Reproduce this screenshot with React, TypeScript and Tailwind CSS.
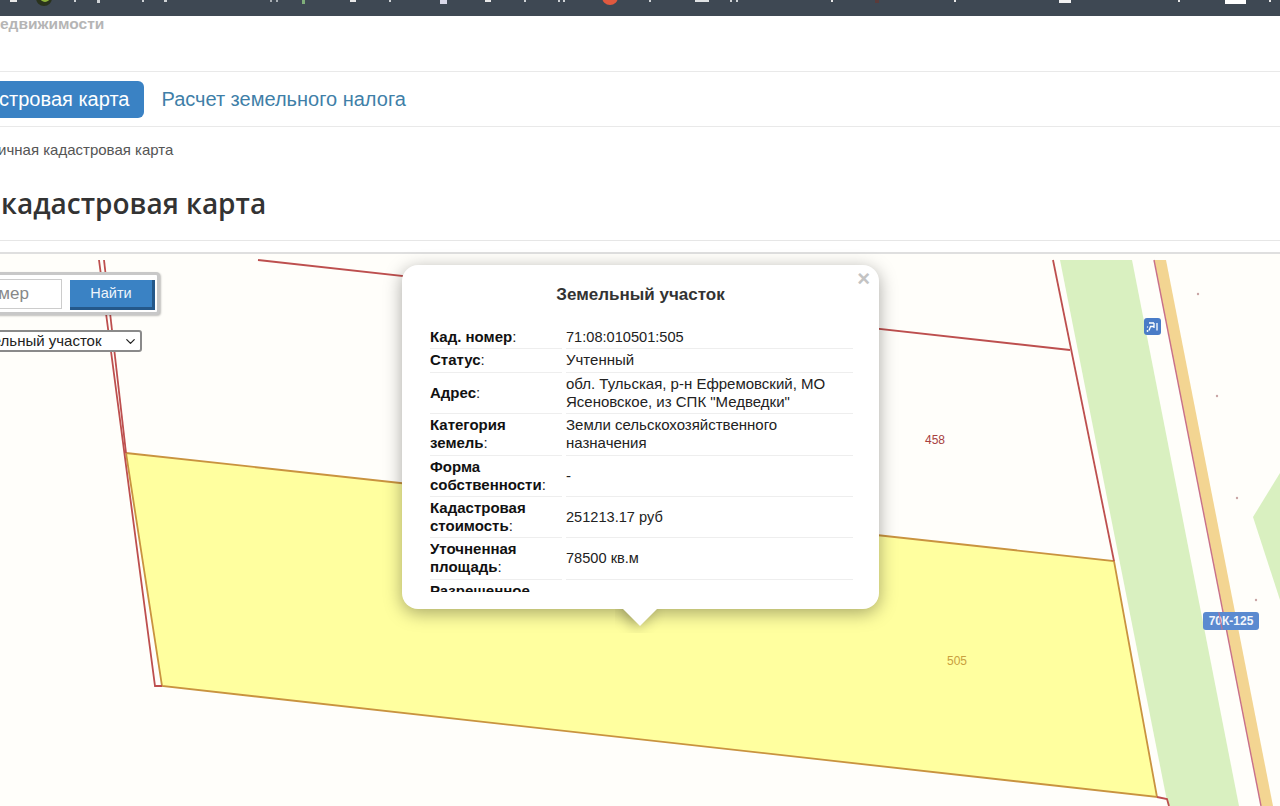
import { ChevronDown } from "lucide-react";

const rows: { label: string; value: string; num?: boolean }[] = [
  { label: "Кад. номер", value: "71:08:010501:505", num: true },
  { label: "Статус", value: "Учтенный" },
  { label: "Адрес", value: 'обл. Тульская, р-н Ефремовский, МО Ясеновское, из СПК "Медведки"' },
  { label: "Категория земель", value: "Земли сельскохозяйственного назначения" },
  { label: "Форма собственности", value: "-" },
  { label: "Кадастровая стоимость", value: "251213.17 руб", num: true },
  { label: "Уточненная площадь", value: "78500 кв.м", num: true },
  { label: "Разрешенное использование", value: "-" },
];

// bits of the bookmark icons that stick out of the cropped bar: x, width, height, colour
const barBits: [number, number, number, string][] = [
  [10, 7, 2, "#e8e8e8"],
  [74, 2, 2, "#cfd3d6"],
  [97, 3, 3, "#cfd3d6"],
  [142, 2, 2, "#cfd3d6"],
  [164, 3, 2, "#cfd3d6"],
  [270, 2, 2, "#aab0b5"],
  [276, 2, 2, "#aab0b5"],
  [302, 3, 4, "#7fae7a"],
  [350, 6, 2, "#e8e8e8"],
  [389, 2, 2, "#cfd3d6"],
  [440, 7, 4, "#d8d8e8"],
  [485, 6, 2, "#e8e8e8"],
  [524, 2, 2, "#cfd3d6"],
  [558, 2, 2, "#cfd3d6"],
  [563, 2, 2, "#cfd3d6"],
  [649, 2, 2, "#cfd3d6"],
  [695, 14, 2, "#dfe2e4"],
  [730, 2, 2, "#cfd3d6"],
  [736, 2, 2, "#cfd3d6"],
  [831, 2, 2, "#e8e8e8"],
  [875, 4, 3, "#5a3b3b"],
  [954, 2, 2, "#e8e8e8"],
  [1059, 12, 3, "#f2f2f2"],
  [1178, 2, 2, "#e8e8e8"],
  [1225, 21, 4, "#ffffff"],
  [1269, 2, 2, "#e8e8e8"],
];

function TopBar() {
  return (
    <div className="h-4 bg-[#3e4853]">
      <svg viewBox="0 0 1280 16" className="block h-4 w-full">
        {barBits.map(([x, w, h, fill]) => (
          <rect key={x} x={x} y={0} width={w} height={h} fill={fill} />
        ))}
        <circle cx="44" cy="-2" r="8" fill="#2a331d" />
        <circle cx="45" cy="-3" r="5" fill="#8fb43a" />
        <circle cx="610" cy="-3" r="8" fill="#e0593f" />
      </svg>
    </div>
  );
}

function MapDrawing() {
  return (
    <svg viewBox="0 254 1280 552" className="absolute inset-0 h-full w-full">
      {/* roads */}
      <polygon points="1060,260 1132,260 1239,806 1168,806" fill="#d9f0c0" />
      <polygon points="1154,260 1166,260 1273,806 1261,806" fill="#f3d592" />
      <line x1="1154" y1="260" x2="1261" y2="806" stroke="#c8708a" strokeWidth="1.4" />
      <polygon points="1280,473 1253,517 1280,600" fill="#d9f0c0" />
      {/* selected parcel */}
      <polygon
        points="126,453 1114,561 1157,797 162,686"
        fill="#ffff9f"
        stroke="#c9933f"
        strokeWidth="1.8"
      />
      {/* parcel borders */}
      <g fill="none" stroke="#bd4f4e" strokeWidth="1.8">
        <polyline points="99,260 155,686 162,686" />
        <polyline points="104,260 126,453" />
        <polyline points="258,260 1070,350" />
        <polyline points="1053,260 1114,561" />
        <polyline points="1157,797 1167,799 1169,806" />
      </g>
      {/* small map marks */}
      <g fill="#c9a5a5">
        <circle cx="1198" cy="294" r="1.2" />
        <circle cx="1217" cy="396" r="1.2" />
        <circle cx="1237" cy="498" r="1.2" />
        <circle cx="1256" cy="600" r="1.2" />
      </g>
    </svg>
  );
}

function Popup() {
  return (
    <div className="absolute left-[402px] top-[11px] h-[344px] w-[477px] rounded-2xl bg-white shadow-[0_4px_18px_rgba(0,0,0,0.35)]">
      <span className="absolute right-[9px] top-[3px] text-[22px] font-bold leading-[22px] text-[#c3c3c3]">×</span>
      <div className="pt-5 text-center text-[17px] font-bold leading-5 text-[#333]">Земельный участок</div>
      <div className="ml-7 mt-[21px] h-[266px] w-[423px] overflow-hidden">
        <div className="grid grid-cols-[132px_287px] gap-x-1 text-[15px] leading-[18px] text-[#222]">
          {rows.map((row) => (
            <div key={row.label} className="contents">
              <div className="flex items-center border-b border-[#eeeeee] pb-[2.4px] pt-[2px]">
                <span>
                  <b className="text-[#111]">{row.label}</b>:
                </span>
              </div>
              <div
                className={
                  row.num
                    ? "flex items-center border-b border-[#eeeeee] pb-[2.4px] pt-[2px] text-[14.6px]"
                    : "flex items-center border-b border-[#eeeeee] pb-[2.4px] pt-[2px]"
                }
              >
                {row.value}
              </div>
            </div>
          ))}
        </div>
      </div>
      {/* leaflet style tip */}
      <div className="absolute left-[213px] top-full h-[24px] w-[50px] overflow-hidden">
        <div className="mx-auto -mt-[12px] h-[24px] w-[24px] rotate-45 bg-white shadow-[0_4px_14px_rgba(0,0,0,0.3)]" />
      </div>
    </div>
  );
}

export default function App() {
  return (
    <div className="h-[806px] w-[1280px] overflow-hidden bg-white font-['Liberation_Sans',sans-serif]">
      <TopBar />

      <div className="h-[56px] border-b border-[#e9e9e9]">
        <div className="text-[15.5px] font-bold leading-[15px] text-[#b5b5b5]">едвижимости</div>
      </div>

      {/* Nav tabs */}
      <nav className="flex h-[55px] items-center gap-[17px] border-b border-[#e9e9e9]">
        <a className="-ml-[166px] flex h-[37px] items-center rounded-md bg-[#3a82c4] px-[15px] text-[20px] text-white">
          Публичная кадастровая карта
        </a>
        <a className="text-[20px] text-[#3f7fa8]">Расчет земельного налога</a>
      </nav>

      {/* Breadcrumb and title */}
      <div className="h-[114px] border-b border-[#e6e6e6]">
        <div className="-ml-[37px] pt-[14px] text-[15px] leading-[18px] text-[#555]">Публичная кадастровая карта</div>
        <h1 className="-ml-[163px] mt-[22px] font-['Open_Sans',sans-serif] text-[28px] font-semibold leading-[44px] text-[#333]">
          Публичная кадастровая карта
        </h1>
      </div>

      <div className="h-[11px]" />

      {/* Map */}
      <div className="relative h-[554px] border-t-2 border-[#dfdfdf] bg-[#fffefa]">
        <MapDrawing />

        <span className="absolute left-[925px] top-[178px] text-xs text-[#a8413f]">458</span>
        <span className="absolute left-[947px] top-[399px] text-xs text-[#c9a040]">505</span>

        <span className="absolute left-[1144px] top-[64px] flex h-[17px] w-[17px] items-center justify-center rounded-[3px] bg-[#4a7cc7]">
          <svg viewBox="0 0 17 17" className="h-[17px] w-[17px]" fill="none" stroke="#ffffff" strokeWidth="1.3">
            <path d="M5 5h5M6 8.5h4M10 5v5M13 5v7.5M6.5 8.5l-1.5 4" />
            <circle cx="3.5" cy="13" r="0.9" fill="#ffffff" stroke="none" />
            <circle cx="3.5" cy="9" r="0.7" fill="#ffffff" stroke="none" />
          </svg>
        </span>
        <span className="absolute left-[1203px] top-[358px] flex h-[18px] w-[56px] items-center justify-center overflow-hidden rounded-[3px] bg-[#5a8ad0] text-xs font-bold text-[#f2f6fc]">
          70К-125
          <span className="absolute left-[17px] top-0 h-full w-px -rotate-[11deg] bg-[#c8708a]" />
        </span>

        {/* Search control */}
        <div className="absolute -left-[140px] top-[18px] flex h-[43px] w-[300px] items-center gap-2 rounded-[4px] border-[3px] border-[#c8c8c8] bg-white pl-[2px] shadow-[1px_1px_2px_rgba(0,0,0,0.25)]">
          <input
            readOnly
            placeholder="Кадастровый номер"
            className="h-[30px] w-[197px] min-w-0 border border-[#cccccc] pl-[4px] text-[17px] outline-none placeholder:text-[#888]"
          />
          <button className="mt-[2px] h-[30px] w-[85px] border-b-[3px] border-r-[3px] border-[#24588a] bg-[#3a82c4] pt-[2px] text-[14.5px] text-[#eef5fb]">
            Найти
          </button>
        </div>

        {/* Type select */}
        <div className="absolute -left-[60px] top-[76px] flex h-[22px] w-[202px] items-center justify-between rounded-[3px] border-2 border-[#8a8a8a] bg-white pl-[23px] pr-[2px] text-[15px] text-[#222]">
          <span>Земельный участок</span>
          <ChevronDown size={15} strokeWidth={2} className="text-[#222]" />
        </div>

        <Popup />
      </div>
    </div>
  );
}
